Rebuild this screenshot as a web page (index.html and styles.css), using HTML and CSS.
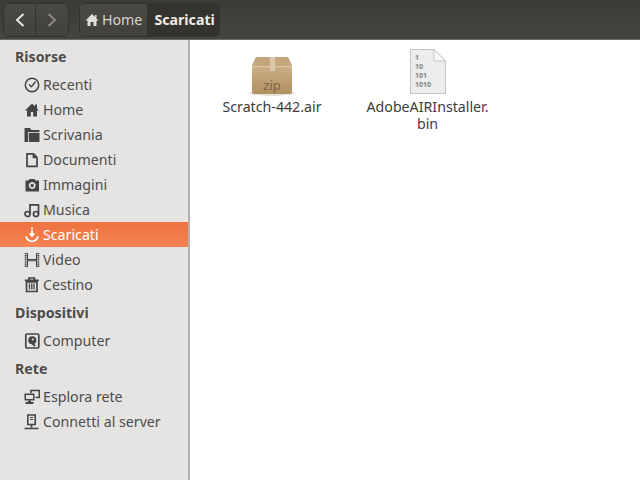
FILE: index.html
```html
<!DOCTYPE html>
<html lang="it">
<head>
    <meta charset="UTF-8">
    <title>Scaricati</title>
    <link rel="stylesheet" href="styles.css">
</head>
<body>
    <header class="toolbar">
        <div class="nav-buttons">
            <button class="nav-btn">
                <svg width="12" height="16" viewBox="0 0 12 16"><path d="M9.500 2 3 8l6.500 6" fill="none" stroke="#e8e6e2" stroke-width="2"/></svg>
            </button>
            <button class="nav-btn">
                <svg width="12" height="16" viewBox="0 0 12 16"><path d="m2.500 2 6.500 6-6.500 6" fill="none" stroke="#8a8880" stroke-width="2"/></svg>
            </button>
        </div>
        <div class="pathbar">
            <div class="crumb">
                <svg width="14" height="14" viewBox="0 0 14 14"><path d="M7 1 0.500 7.500H2.500V13H5.500V9H8.500V13H11.500V7.500H13.500L11.500 5.500V2H10V4Z" fill="#e0ded9"/></svg>
                Home
            </div>
            <div class="crumb current">Scaricati</div>
        </div>
    </header>
    <div class="window">
        <nav class="sidebar">
            <h2>Risorse</h2>
            <a class="place">
                <svg width="16" height="16" viewBox="0 0 16 16"><circle cx="8" cy="8" r="6.700" fill="none" stroke="#444" stroke-width="1.500"/><path d="M5 7.500 7.500 9.800 11.500 4.800" fill="none" stroke="#444" stroke-width="1.400"/></svg>
                Recenti
            </a>
            <a class="place">
                <svg width="16" height="16" viewBox="0 0 16 16"><path d="M8 1.500 1 8.500H3V14.500H6.800V10H9.200V14.500H13V8.500H15L13 6.500V2.500H11V4.500Z" fill="#444"/></svg>
                Home
            </a>
            <a class="place">
                <svg width="16" height="16" viewBox="0 0 16 16"><path d="M0.500 1H6L7.500 3H15.500V5H4V15H0.500Z" fill="#444"/><path d="M4.800 5.800H15.500V15H4.800Z" fill="#444"/></svg>
                Scrivania
            </a>
            <a class="place">
                <svg width="16" height="16" viewBox="0 0 16 16"><path d="M3 1.800H9.500L13 5.300V14.300H3Z M9.500 1.800V5.300H13" fill="none" stroke="#444" stroke-width="1.700"/></svg>
                Documenti
            </a>
            <a class="place">
                <svg width="16" height="16" viewBox="0 0 16 16"><path fill-rule="evenodd" d="M1.500 3.500H4.500L5.500 2H10.500L11.500 3.500H15V14.500H1.500ZM8.200 5a3.500 3.500 0 1 0 .01 0ZM8.200 6.800a1.700 1.700 0 1 1-.01 0Z" fill="#444"/></svg>
                Immagini
            </a>
            <a class="place">
                <svg width="16" height="16" viewBox="0 0 16 16"><g fill="none" stroke="#444" stroke-width="1.700"><circle cx="3.500" cy="12" r="2.500"/><circle cx="12" cy="12" r="2.500"/><path d="M6 12V2.800H14.500V12"/></g></svg>
                Musica
            </a>
            <a class="place active">
                <svg width="16" height="16" viewBox="0 0 16 16"><path d="M8 0.500V2.300M8 3.500V8" stroke="#fff" stroke-width="2" fill="none"/><path d="M4.500 6.500 8 10.300 11.500 6.500Z" fill="#fff"/><path d="M2 9.500C3 13 5.500 14.300 8 14.300S13 13 14 9.500" stroke="#fff" stroke-width="1.800" fill="none"/></svg>
                Scaricati
            </a>
            <a class="place">
                <svg width="16" height="16" viewBox="0 0 16 16"><path d="M3.500 1V15M12.500 1V15M3.500 7.500H12.500M3.500 8.800H12.500" stroke="#444" stroke-width="1" fill="none"/><path d="M1.700 1V15M14.300 1V15" stroke="#444" stroke-width="2" stroke-dasharray="1.300 .8" fill="none"/></svg>
                Video
            </a>
            <a class="place">
                <svg width="16" height="16" viewBox="0 0 16 16"><path d="M0.800 3.300H14.800M5 3V1H10.500V3" stroke="#444" stroke-width="1.700" fill="none"/><path d="M2.500 4.800H13V14.500H2.500Z" fill="none" stroke="#444" stroke-width="1.700"/><path d="M5.500 6.500V12.500M7.800 6.500V12.500M10 6.500V12.500" stroke="#444" stroke-width="1.300"/></svg>
                Cestino
            </a>
            <h2>Dispositivi</h2>
            <a class="place">
                <svg width="16" height="16" viewBox="0 0 16 16"><rect x="1.800" y="1" width="13" height="14" rx="1.200" fill="none" stroke="#444" stroke-width="1.700"/><circle cx="8.300" cy="7.200" r="4" fill="#444"/><circle cx="8.800" cy="6.500" r="1.100" fill="#e6e4e2"/><path d="M7 9 11 13" stroke="#444" stroke-width="1.800"/></svg>
                Computer
            </a>
            <h2>Rete</h2>
            <a class="place">
                <svg width="16" height="16" viewBox="0 0 16 16"><path fill-rule="evenodd" d="M0.500 4.500H10.500V11.500H0.500ZM2 6V10H9V6Z" fill="#444"/><path d="M4 11.500H7V13H9.500V15H1.500V13H4Z" fill="#444"/><path d="M7 4V1.500H15.300V8.500H11.500" fill="none" stroke="#444" stroke-width="1.600"/></svg>
                Esplora rete
            </a>
            <a class="place">
                <svg width="16" height="16" viewBox="0 0 16 16"><path d="M3.800 1H11.200V10.500H3.800Z" fill="none" stroke="#444" stroke-width="1.600"/><path d="M6 3.500H9M6 5.500H9" stroke="#444" stroke-width="1.200"/><path d="M7.500 11V13.500M0.500 14.500H14.500" stroke="#444" stroke-width="1.700"/></svg>
                Connetti al server
            </a>
        </nav>
        <main class="files">
            <div class="file">
                <svg class="file-icon" width="48" height="48" viewBox="0 0 48 48">
                    <defs>
                        <linearGradient id="box" x1="0" y1="0" x2="0" y2="1"><stop offset="0" stop-color="#d6ba94"/><stop offset="1" stop-color="#b0905f"/></linearGradient>
                    </defs>
                    <ellipse cx="24" cy="44" rx="23" ry="3" fill="#e6e2dc"/>
                    <path d="M8 8H40L44 17V43Q44 45 42 45H6Q4 45 4 43V17Z" fill="url(#box)"/>
                    <path d="M8 8H40L44 17H4Z" fill="#c4a67e"/>
                    <path d="M22 8H27V22H22Z" fill="#e2d0b4" opacity=".8"/>
                    <path d="M4 17.500H44" stroke="#dfcbac" stroke-width="1"/>
                    <text class="zip-label" x="24" y="41" text-anchor="middle">zip</text>
                </svg>
                <span class="file-name">Scratch-442.air</span>
            </div>
            <div class="file">
                <svg class="file-icon" width="48" height="48" viewBox="0 0 48 48">
                    <path d="M6.500 .5H30L41.500 12V44.500H6.500Z" fill="#eceded" stroke="#c4c4c4"/>
                    <path d="M30 .5 41.500 12H30Z" fill="#fafafa" stroke="#c8c8c8"/>
                    <text class="bin-label" x="11" y="11">1</text>
                    <text class="bin-label" x="11" y="20">10</text>
                    <text class="bin-label" x="11" y="29">101</text>
                    <text class="bin-label" x="11" y="38">1010</text>
                </svg>
                <span class="file-name">AdobeAIRInstaller.<br>bin</span>
            </div>
        </main>
    </div>
</body>
</html>
```

FILE: styles.css
```css
html, body {
    margin: 0;
    padding: 0;
    height: 100%;
    overflow: hidden;
}

body {
    font-family: "Noto Sans", sans-serif;
    font-size: 14.2px;
    color: #4c4c4c;
    background: #fff;
}

.toolbar {
    display: flex;
    align-items: center;
    gap: 10px;
    box-sizing: border-box;
    height: 40px;
    padding: 0 3px 1px 3px;
    background: linear-gradient(to bottom, #3c3b37, #45443f);
    border-bottom: 1px solid #6a6964;
}

.nav-buttons, .pathbar {
    display: flex;
    height: 32px;
    border: 1px solid #33322e;
    border-radius: 5px;
    overflow: hidden;
    margin-top: 1px;
}

.nav-btn {
    display: flex;
    align-items: center;
    justify-content: center;
    width: 32px;
    padding: 0;
    border: none;
    border-right: 1px solid #33322e;
    background: linear-gradient(to bottom, #4a4943, #42413c);
}

.nav-btn:last-child {
    border-right: none;
}

.crumb {
    display: flex;
    align-items: center;
    gap: 3px;
    padding: 0 5px;
    color: #d6d4cf;
    background: linear-gradient(to bottom, #4a4943, #42413c);
}

.crumb.current {
    padding: 0 4px 0 7px;
    font-weight: bold;
    color: #eeece8;
    background: #34332e;
}

.window {
    display: flex;
    height: 440px;
}

.sidebar {
    position: relative;
    flex: none;
    box-sizing: border-box;
    width: 190px;
    padding-top: 1px;
    background: #e6e4e2;
    border-right: 2px solid #b5b3b0;
}

/* resize grip */
.sidebar::after {
    content: "";
    position: absolute;
    top: 239px;
    right: 1px;
    width: 2px;
    height: 33px;
    background: repeating-linear-gradient(to bottom, #f4f3f2 0 1px, transparent 1px 4px);
}

.sidebar h2 {
    margin: 0;
    padding: 0 0 0 15px;
    height: 31px;
    line-height: 31px;
    font-size: 14.2px;
    font-weight: bold;
    color: #4c4c4c;
}

.place {
    display: flex;
    align-items: center;
    gap: 3px;
    height: 25px;
    padding-left: 24px;
    color: #4c4c4c;
}

.place.active {
    color: #fff;
    background: linear-gradient(to bottom, #ee7340, #f58352);
}

.files {
    flex: 1;
    display: flex;
    align-items: flex-start;
    padding-top: 9px;
}

.file {
    display: flex;
    flex-direction: column;
    align-items: center;
    width: 171px;
    color: #3c3c3c;
    text-align: center;
    line-height: 17px;
}

.file:first-child {
    margin-left: 12px;
    width: 140px;
}

.file-name {
    margin-top: 1px;
}

.zip-label {
    font-family: "Noto Sans", sans-serif;
    font-size: 13px;
    fill: #7c6444;
}

.bin-label {
    font-family: "Noto Sans", sans-serif;
    font-size: 7px;
    font-weight: bold;
    fill: #85878a;
}
```
